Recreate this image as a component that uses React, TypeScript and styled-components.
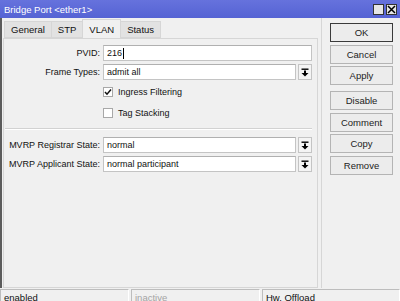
import React from "react";
import styled, { createGlobalStyle } from "styled-components";

const GlobalStyle = createGlobalStyle`
  html, body {
    margin: 0;
    padding: 0;
    background: #f0f0f0;
    overflow: hidden;
  }
  body {
    font-family: "Liberation Sans", Arial, sans-serif;
    font-size: 9px;
    color: #111;
  }
`;

const Window = styled.div`
  width: 400px;
  height: 306px;
  display: flex;
  flex-direction: column;
  background: #f0f0f0;
  overflow: hidden;
`;

const TitleBar = styled.div`
  height: 18px;
  flex: none;
  display: flex;
  align-items: center;
  padding: 0 3px 0 4px;
  background: linear-gradient(#6672dd, #5563d4);
  color: #fff;
  font-size: 9.5px;
`;

const Title = styled.span`
  flex: 1;
`;

const TitleButton = styled.div`
  width: 11px;
  height: 11px;
  margin-left: 2px;
  box-sizing: border-box;
  border: 1px solid #333;
  background: #e6e6e6;
  display: flex;
  align-items: center;
  justify-content: center;
`;

const Body = styled.div`
  height: 270px;
  flex: none;
  display: flex;
  border-left: 2px solid #5c5c5c;
`;

const Main = styled.div`
  width: 315px;
  flex: none;
  display: flex;
  flex-direction: column;
  padding: 1px 0 0 1px;
`;

const Tabs = styled.div`
  display: flex;
  align-items: flex-end;
  height: 19px;
  padding-left: 1px;
`;

const Tab = styled.div<{ active?: boolean }>`
  height: ${(p) => (p.active ? "19px" : "17px")};
  box-sizing: border-box;
  display: flex;
  align-items: center;
  padding: 0 6px;
  background: ${(p) => (p.active ? "#f0f0f0" : "#e2e2e2")};
  border: 1px solid #d6d6d6;
  border-bottom: ${(p) => (p.active ? "none" : "1px solid #d6d6d6")};
  margin-right: -1px;
  font-size: 9.5px;
  color: #111;
`;

const Panel = styled.div`
  flex: 1;
  box-sizing: border-box;
  border: 1px solid #d6d6d6;
  padding: 6px 5px 0 0;
  display: flex;
  flex-direction: column;
`;

const Row = styled.div<{ gap?: number }>`
  display: grid;
  grid-template-columns: 96px 1fr;
  column-gap: 3px;
  align-items: center;
  height: 16px;
  margin-bottom: ${(p) => p.gap ?? 3}px;
`;

const Label = styled.div`
  text-align: right;
  white-space: nowrap;
`;

const Field = styled.div`
  display: flex;
  gap: 2px;
  height: 16px;
`;

const Input = styled.div`
  flex: 1;
  box-sizing: border-box;
  background: #fff;
  border: 1px solid #c4c4c4;
  border-top-color: #b0b0b0;
  padding: 0 3px;
  display: flex;
  align-items: center;
  white-space: nowrap;
  overflow: hidden;
`;

const Caret = styled.span`
  display: inline-block;
  width: 1px;
  height: 11px;
  background: #000;
  margin-left: 1px;
`;

const DropButton = styled.div`
  width: 14px;
  box-sizing: border-box;
  border: 1px solid #c4c4c4;
  background: #f4f4f4;
  display: flex;
  align-items: center;
  justify-content: center;
`;

const CheckRow = styled.div`
  display: flex;
  align-items: center;
  gap: 5px;
  padding-left: 99px;
  height: 17px;
  margin-bottom: 4px;
`;

const Box = styled.div`
  width: 10px;
  height: 10px;
  box-sizing: border-box;
  border: 1px solid #a8a8a8;
  background: #fff;
  display: flex;
  align-items: center;
  justify-content: center;
`;

const Separator = styled.div`
  height: 0;
  border-top: 1px solid #d2d2d2;
  border-bottom: 1px solid #fff;
  margin: 3px 0 7px 1px;
`;

const Side = styled.div`
  flex: 1;
  display: flex;
  flex-direction: column;
  padding: 5px 7px 0 8px;
  border-left: 1px solid #d6d6d6;
  margin-left: 3px;
`;

const Button = styled.div<{ primary?: boolean; spaced?: boolean }>`
  height: 19px;
  flex: none;
  box-sizing: border-box;
  border: 1px solid ${(p) => (p.primary ? "#3a3a3a" : "#b4b4b4")};
  background: #ececec;
  display: flex;
  align-items: center;
  justify-content: center;
  margin-bottom: 2.5px;
  margin-top: ${(p) => (p.spaced ? "3.5px" : "0")};
  font-size: 9.5px;
  color: #222;
`;

const StatusBar = styled.div`
  height: 18px;
  flex: none;
  display: flex;
  gap: 2px;
  padding: 1px 0 0 0;
`;

const StatusCell = styled.div<{ dim?: boolean; grow?: boolean }>`
  width: ${(p) => (p.grow ? "auto" : "129px")};
  flex: ${(p) => (p.grow ? 1 : "none")};
  box-sizing: border-box;
  border: 1px solid;
  border-color: #bdbdbd #fff #fff #bdbdbd;
  padding: 2px 3px;
  color: ${(p) => (p.dim ? "#a4a4a4" : "#111")};
  font-size: 9.5px;
`;

const DropIcon = () => (
  <svg width="8" height="9" viewBox="0 0 8 9">
    <rect x="0.5" y="0.5" width="7" height="1.4" fill="#000" />
    <rect x="3" y="2.5" width="2" height="3" fill="#000" />
    <polygon points="0.5,5 7.5,5 4,8.6" fill="#000" />
  </svg>
);

const Check = () => (
  <svg width="8" height="8" viewBox="0 0 8 8">
    <polyline points="1,4 3,6.2 7,1.5" fill="none" stroke="#111" strokeWidth="1.5" />
  </svg>
);

const Select = ({ value }: { value: string }) => (
  <Field>
    <Input>{value}</Input>
    <DropButton>
      <DropIcon />
    </DropButton>
  </Field>
);

export default function App() {
  return (
    <Window>
      <GlobalStyle />
      <TitleBar>
        <Title>Bridge Port &lt;ether1&gt;</Title>
        <TitleButton />
        <TitleButton>
          <svg width="9" height="9" viewBox="0 0 9 9">
            <path d="M1 1 L8 8 M8 1 L1 8" stroke="#000" strokeWidth="1.5" />
          </svg>
        </TitleButton>
      </TitleBar>
      <Body>
        <Main>
          <Tabs>
            <Tab>General</Tab>
            <Tab>STP</Tab>
            <Tab active>VLAN</Tab>
            <Tab>Status</Tab>
          </Tabs>
          <Panel>
            <Row>
              <Label>PVID:</Label>
              <Field>
                <Input>
                  216
                  <Caret />
                </Input>
              </Field>
            </Row>
            <Row gap={3}>
              <Label>Frame Types:</Label>
              <Select value="admit all" />
            </Row>
            <CheckRow>
              <Box>
                <Check />
              </Box>
              Ingress Filtering
            </CheckRow>
            <CheckRow>
              <Box />
              Tag Stacking
            </CheckRow>
            <Separator />
            <Row>
              <Label>MVRP Registrar State:</Label>
              <Select value="normal" />
            </Row>
            <Row>
              <Label>MVRP Applicant State:</Label>
              <Select value="normal participant" />
            </Row>
          </Panel>
        </Main>
        <Side>
          <Button primary>OK</Button>
          <Button>Cancel</Button>
          <Button>Apply</Button>
          <Button spaced>Disable</Button>
          <Button>Comment</Button>
          <Button>Copy</Button>
          <Button>Remove</Button>
        </Side>
      </Body>
      <StatusBar>
        <StatusCell>enabled</StatusCell>
        <StatusCell dim>inactive</StatusCell>
        <StatusCell grow>Hw. Offload</StatusCell>
      </StatusBar>
    </Window>
  );
}
